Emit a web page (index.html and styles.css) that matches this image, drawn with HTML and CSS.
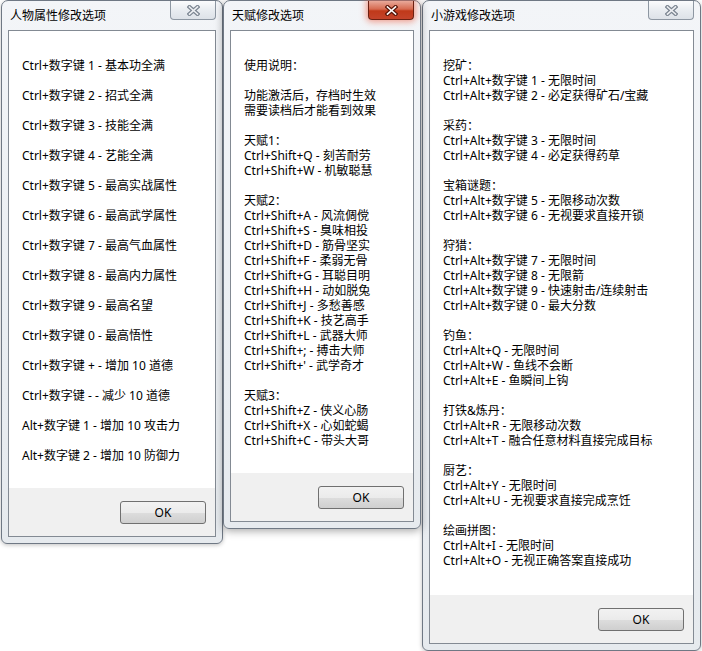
FILE: index.html
```html
<!DOCTYPE html>
<html lang="zh-CN">
<head>
    <meta charset="UTF-8">
    <title>修改选项</title>
    <link rel="stylesheet" href="styles.css">
</head>
<body>
    <div class="desk">
        <!-- 人物属性 -->
        <div class="win win-attr">
            <div class="titlebar">
                <span class="title">人物属性修改选项</span>
                <span class="close">
                    <svg width="13" height="11" viewBox="0 0 13 11">
                        <path d="M2.5 2 L10.5 9 M10.5 2 L2.5 9" stroke="#7b8591" stroke-width="4" stroke-linecap="square"/>
                        <path d="M2.5 2 L10.5 9 M10.5 2 L2.5 9" stroke="#eef0f3" stroke-width="1.6" stroke-linecap="square"/>
                    </svg>
                </span>
            </div>
            <div class="client">
                <div class="content spaced">
                    <p>Ctrl+数字键 1 - 基本功全满</p>
                    <p>Ctrl+数字键 2 - 招式全满</p>
                    <p>Ctrl+数字键 3 - 技能全满</p>
                    <p>Ctrl+数字键 4 - 艺能全满</p>
                    <p>Ctrl+数字键 5 - 最高实战属性</p>
                    <p>Ctrl+数字键 6 - 最高武学属性</p>
                    <p>Ctrl+数字键 7 - 最高气血属性</p>
                    <p>Ctrl+数字键 8 - 最高内力属性</p>
                    <p>Ctrl+数字键 9 - 最高名望</p>
                    <p>Ctrl+数字键 0 - 最高悟性</p>
                    <p>Ctrl+数字键 + - 增加 10 道德</p>
                    <p>Ctrl+数字键 - - 减少 10 道德</p>
                    <p>Alt+数字键 1 - 增加 10 攻击力</p>
                    <p>Alt+数字键 2 - 增加 10 防御力</p>
                </div>
                <div class="footer"><button class="btn">OK</button></div>
            </div>
        </div>

        <!-- 天赋 (active) -->
        <div class="win win-talent active">
            <div class="titlebar">
                <span class="title">天赋修改选项</span>
                <span class="close">
                    <svg width="13" height="11" viewBox="0 0 13 11">
                        <path d="M2.5 2 L10.5 9 M10.5 2 L2.5 9" stroke="#5a1508" stroke-width="4" stroke-linecap="square"/>
                        <path d="M2.5 2 L10.5 9 M10.5 2 L2.5 9" stroke="#ffffff" stroke-width="1.6" stroke-linecap="square"/>
                    </svg>
                </span>
            </div>
            <div class="client">
                <div class="content">
                    <div class="group">
                        <p>使用说明：</p>
                    </div>
                    <div class="group">
                        <p>功能激活后，存档时生效</p>
                        <p>需要读档后才能看到效果</p>
                    </div>
                    <div class="group">
                        <p>天赋1：</p>
                        <p>Ctrl+Shift+Q - 刻苦耐劳</p>
                        <p>Ctrl+Shift+W - 机敏聪慧</p>
                    </div>
                    <div class="group">
                        <p>天赋2：</p>
                        <p>Ctrl+Shift+A - 风流倜傥</p>
                        <p>Ctrl+Shift+S - 臭味相投</p>
                        <p>Ctrl+Shift+D - 筋骨坚实</p>
                        <p>Ctrl+Shift+F - 柔弱无骨</p>
                        <p>Ctrl+Shift+G - 耳聪目明</p>
                        <p>Ctrl+Shift+H - 动如脱兔</p>
                        <p>Ctrl+Shift+J - 多愁善感</p>
                        <p>Ctrl+Shift+K - 技艺高手</p>
                        <p>Ctrl+Shift+L - 武器大师</p>
                        <p>Ctrl+Shift+; - 搏击大师</p>
                        <p>Ctrl+Shift+' - 武学奇才</p>
                    </div>
                    <div class="group">
                        <p>天赋3：</p>
                        <p>Ctrl+Shift+Z - 侠义心肠</p>
                        <p>Ctrl+Shift+X - 心如蛇蝎</p>
                        <p>Ctrl+Shift+C - 带头大哥</p>
                    </div>
                </div>
                <div class="footer"><button class="btn">OK</button></div>
            </div>
        </div>

        <!-- 小游戏 -->
        <div class="win win-game">
            <div class="titlebar">
                <span class="title">小游戏修改选项</span>
                <span class="close">
                    <svg width="13" height="11" viewBox="0 0 13 11">
                        <path d="M2.5 2 L10.5 9 M10.5 2 L2.5 9" stroke="#7b8591" stroke-width="4" stroke-linecap="square"/>
                        <path d="M2.5 2 L10.5 9 M10.5 2 L2.5 9" stroke="#eef0f3" stroke-width="1.6" stroke-linecap="square"/>
                    </svg>
                </span>
            </div>
            <div class="client">
                <div class="content">
                    <div class="group">
                        <p>挖矿：</p>
                        <p>Ctrl+Alt+数字键 1 - 无限时间</p>
                        <p>Ctrl+Alt+数字键 2 - 必定获得矿石/宝藏</p>
                    </div>
                    <div class="group">
                        <p>采药：</p>
                        <p>Ctrl+Alt+数字键 3 - 无限时间</p>
                        <p>Ctrl+Alt+数字键 4 - 必定获得药草</p>
                    </div>
                    <div class="group">
                        <p>宝箱谜题：</p>
                        <p>Ctrl+Alt+数字键 5 - 无限移动次数</p>
                        <p>Ctrl+Alt+数字键 6 - 无视要求直接开锁</p>
                    </div>
                    <div class="group">
                        <p>狩猎：</p>
                        <p>Ctrl+Alt+数字键 7 - 无限时间</p>
                        <p>Ctrl+Alt+数字键 8 - 无限箭</p>
                        <p>Ctrl+Alt+数字键 9 - 快速射击/连续射击</p>
                        <p>Ctrl+Alt+数字键 0 - 最大分数</p>
                    </div>
                    <div class="group">
                        <p>钓鱼：</p>
                        <p>Ctrl+Alt+Q - 无限时间</p>
                        <p>Ctrl+Alt+W - 鱼线不会断</p>
                        <p>Ctrl+Alt+E - 鱼瞬间上钩</p>
                    </div>
                    <div class="group">
                        <p>打铁&amp;炼丹：</p>
                        <p>Ctrl+Alt+R - 无限移动次数</p>
                        <p>Ctrl+Alt+T - 融合任意材料直接完成目标</p>
                    </div>
                    <div class="group">
                        <p>厨艺：</p>
                        <p>Ctrl+Alt+Y - 无限时间</p>
                        <p>Ctrl+Alt+U - 无视要求直接完成烹饪</p>
                    </div>
                    <div class="group">
                        <p>绘画拼图：</p>
                        <p>Ctrl+Alt+I - 无限时间</p>
                        <p>Ctrl+Alt+O - 无视正确答案直接成功</p>
                    </div>
                </div>
                <div class="footer"><button class="btn">OK</button></div>
            </div>
        </div>
    </div>
</body>
</html>
```

FILE: styles.css
```css
body {
    margin: 0;
    background-color: #fff;
    font-family: "Segoe UI", "Noto Sans", "Noto Sans CJK SC", sans-serif;
    font-size: 12px;
    color: #000;
}
.desk {
    position: relative;
    width: 702px;
    height: 651px;
    overflow: hidden;
}

/* window frame */
.win {
    position: absolute;
    top: 0;
    box-sizing: border-box;
    display: flex;
    flex-direction: column;
    padding: 0 6px 6px;
    border: 1px solid #6f7884;
    border-radius: 7px 7px 6px 6px;
    background: linear-gradient(#f3f5f8, #eaeef2 60%, #e6eaee);
    box-shadow: 0 1px 4px rgba(0, 0, 0, 0.25);
}
.win-attr {
    left: 1px;
    width: 222px;
    height: 544px;
}
.win-talent {
    left: 223px;
    width: 198px;
    height: 529px;
    z-index: 2;
    box-shadow: 0 2px 8px rgba(0, 0, 0, 0.35);
}
.win-game {
    left: 422px;
    width: 279px;
    height: 651px;
}

.titlebar {
    display: flex;
    align-items: flex-start;
    height: 29px;
    flex-shrink: 0;
}
.title {
    padding: 7px 0 0 2px;
    line-height: 15px;
    white-space: nowrap;
}
.close {
    margin-left: auto;
    width: 46px;
    height: 19px;
    box-sizing: border-box;
    display: flex;
    align-items: center;
    justify-content: center;
    border: 1px solid #8d97a2;
    border-top: none;
    border-radius: 0 0 4px 4px;
    background: linear-gradient(#fbfcfd, #e9edf1 50%, #dde2e8);
}
.active .close {
    border-color: #6b2012;
    background: linear-gradient(#e9a99a, #d66a50 45%, #c0391a 55%, #c4432a);
    box-shadow: 0 0 6px 2px rgba(236, 90, 60, 0.55);
}

/* client area */
.client {
    flex: 1;
    display: flex;
    flex-direction: column;
    border: 1px solid #838a93;
    background-color: #f0f0f0;
    min-height: 0;
}
.content {
    flex: 1;
    background-color: #fff;
    padding: 27px 12px 0 13px;
}
.content p {
    margin: 0;
    line-height: 15px;
    white-space: nowrap;
}
.content.spaced p {
    margin-bottom: 15px;
}
.group {
    margin-bottom: 15px;
}
.footer {
    height: 48px;
    flex-shrink: 0;
    display: flex;
    justify-content: flex-end;
    align-items: flex-start;
    padding: 13px 9px 0 0;
    box-sizing: border-box;
}
.btn {
    width: 86px;
    height: 23px;
    border: 1px solid #707070;
    border-radius: 3px;
    background: linear-gradient(#f2f2f2, #ebebeb 50%, #dddddd 51%, #cfcfcf);
    font-family: "Segoe UI", "Noto Sans", sans-serif;
    font-size: 12px;
    color: #000;
    padding: 0;
}
```
